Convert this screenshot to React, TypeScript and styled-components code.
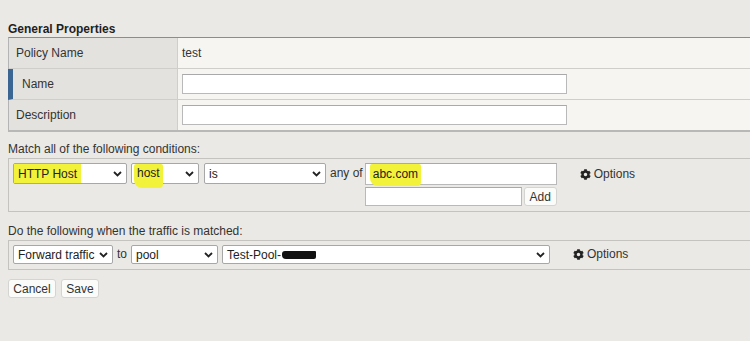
import styled, { createGlobalStyle } from 'styled-components';
import { FaCog } from 'react-icons/fa';

const GlobalStyle = createGlobalStyle`
    html, body {
        margin: 0;
        padding: 0;
        background: #eae9e5;
    }
    body {
        font-family: 'Liberation Sans', Arial, sans-serif;
        font-size: 12px;
        color: #2b2b2b;
    }
`;

const Page = styled.div`
    display: flex;
    flex-direction: column;
    padding: 22px 0 0 8px;
    height: 341px;
    box-sizing: border-box;
`;

const Heading = styled.div`
    font-weight: bold;
    font-size: 12px;
    line-height: 14px;
    color: #1f1f1f;
    margin-bottom: 1px;
`;

const PropTable = styled.div`
    display: grid;
    grid-template-columns: 169px 1fr;
    border-top: 1px solid #8c8c8c;
    border-left: 1px solid #b4b4b4;
    border-bottom: 2px solid #b8b8b6;
`;

const LabelCell = styled.div<{ $marked?: boolean }>`
    display: flex;
    align-items: center;
    height: 30px;
    padding-left: ${(p) => (p.$marked ? '9px' : '7px')};
    background: #e3e2de;
    border-left: ${(p) => (p.$marked ? '5px solid #3b6694' : '0')};
    margin-left: ${(p) => (p.$marked ? '-1px' : '0')};
    border-right: 1px solid #cfcecb;
    border-bottom: 1px solid #cfcecb;
    color: #333;
    &:nth-last-child(2) {
        border-bottom: 0;
    }
`;

const ValueCell = styled.div`
    display: flex;
    align-items: center;
    height: 30px;
    padding-left: 4px;
    background: #f6f5f2;
    border-bottom: 1px solid #cfcecb;
    color: #333;
    &:last-child {
        border-bottom: 0;
    }
`;

const TextInput = styled.div<{ $w: number; $h?: number }>`
    width: ${(p) => p.$w}px;
    height: ${(p) => p.$h ?? 20}px;
    box-sizing: border-box;
    display: flex;
    align-items: center;
    padding-left: 2px;
    background: #fff;
    border: 1px solid #b9b9b9;
    border-top-color: #a9a9a9;
    color: #222;
`;

const SectionLabel = styled.div<{ $top: number }>`
    margin-top: ${(p) => p.$top}px;
    line-height: 14px;
    margin-bottom: 2px;
    color: #333;
`;

const RuleBox = styled.div<{ $h: number }>`
    display: flex;
    align-items: flex-start;
    height: ${(p) => p.$h}px;
    box-sizing: border-box;
    padding: 4px 0 0 4px;
    border: 1px solid #c4c3bf;
    border-right: 0;
    gap: 4px;
`;

const Select = styled.div<{ $w: number; $h?: number }>`
    width: ${(p) => p.$w}px;
    height: ${(p) => p.$h ?? 21}px;
    box-sizing: border-box;
    display: flex;
    align-items: center;
    justify-content: space-between;
    padding: 0 4px 0 0;
    background: #fff;
    border: 1px solid #a7a7a7;
    border-radius: 2px;
    color: #222;
    font-size: 12px;
    flex-shrink: 0;
`;

const SelectText = styled.span`
    padding-left: 4px;
`;

const Highlight = styled.span<{ $drop?: boolean }>`
    display: flex;
    align-items: ${(p) => (p.$drop ? 'flex-start' : 'center')};
    align-self: ${(p) => (p.$drop ? 'flex-start' : 'stretch')};
    padding: ${(p) => (p.$drop ? '2px 3px 0' : '0 4px')};
    margin-left: ${(p) => (p.$drop ? '2px' : '0')};
    height: ${(p) => (p.$drop ? '24px' : 'auto')};
    box-sizing: border-box;
    background: #f2f23a;
    border-radius: ${(p) => (p.$drop ? '2px 2px 4px 8px' : '0')};
    position: relative;
    z-index: 1;
`;

const Chevron = () => (
    <svg width="9" height="6" viewBox="0 0 9 6">
        <path d="M1 1l3.5 3.5L8 1" fill="none" stroke="#222" strokeWidth="1.8" />
    </svg>
);

const Word = styled.span<{ $top?: number }>`
    padding-top: ${(p) => p.$top ?? 3}px;
    color: #333;
`;

const ValueStack = styled.div`
    display: flex;
    flex-direction: column;
    gap: 2px;
    margin-left: -2px;
`;

const StackRow = styled.div`
    display: flex;
    gap: 2px;
`;

const SmallButton = styled.button<{ $w: number; $h?: number }>`
    width: ${(p) => p.$w}px;
    height: ${(p) => p.$h ?? 19}px;
    padding: 0;
    background: #fbfbfa;
    border: 1px solid #d4d4d2;
    border-radius: 3px;
    font-family: inherit;
    font-size: 12px;
    color: #333;
`;

const Options = styled.div<{ $ml: number }>`
    display: flex;
    align-items: center;
    gap: 3px;
    margin-left: ${(p) => p.$ml}px;
    padding-top: 4px;
    color: #333;
    svg {
        color: #222;
    }
`;

const Redacted = styled.span`
    display: inline-block;
    width: 34px;
    height: 8px;
    margin-left: 1px;
    background: #111;
    border-radius: 3px 1px 2px 4px;
    vertical-align: middle;
`;

const ButtonBar = styled.div`
    display: flex;
    gap: 5px;
    margin-top: 9px;
`;

export default function App() {
    return (
        <>
            <GlobalStyle />
            <Page>
                <Heading>General Properties</Heading>
                <PropTable>
                    <LabelCell>Policy Name</LabelCell>
                    <ValueCell>test</ValueCell>
                    <LabelCell $marked>Name</LabelCell>
                    <ValueCell>
                        <TextInput $w={385} />
                    </ValueCell>
                    <LabelCell>Description</LabelCell>
                    <ValueCell>
                        <TextInput $w={385} />
                    </ValueCell>
                </PropTable>

                <SectionLabel $top={10}>Match all of the following conditions:</SectionLabel>
                <RuleBox $h={54}>
                    <Select $w={114}>
                        <Highlight>HTTP Host</Highlight>
                        <Chevron />
                    </Select>
                    <Select $w={68}>
                        <Highlight $drop>host</Highlight>
                        <Chevron />
                    </Select>
                    <Select $w={122} style={{ marginLeft: 1 }}>
                        <SelectText>is</SelectText>
                        <Chevron />
                    </Select>
                    <Word>any of</Word>
                    <ValueStack>
                        <TextInput $w={192} $h={22}>
                            <Highlight $drop style={{ height: 22, paddingTop: 3 }}>abc.com</Highlight>
                        </TextInput>
                        <StackRow>
                            <TextInput $w={157} $h={19} />
                            <SmallButton $w={33}>Add</SmallButton>
                        </StackRow>
                    </ValueStack>
                    <Options $ml={19}>
                        <FaCog size={11} />
                        Options
                    </Options>
                </RuleBox>

                <SectionLabel $top={12}>Do the following when the traffic is matched:</SectionLabel>
                <RuleBox $h={30}>
                    <Select $w={100} $h={19}>
                        <SelectText>Forward traffic</SelectText>
                        <Chevron />
                    </Select>
                    <Word $top={2}>to</Word>
                    <Select $w={87} $h={19}>
                        <SelectText>pool</SelectText>
                        <Chevron />
                    </Select>
                    <Select $w={328} $h={19}>
                        <SelectText>
                            Test-Pool-
                            <Redacted />
                        </SelectText>
                        <Chevron />
                    </Select>
                    <Options $ml={19} style={{ paddingTop: 2 }}>
                        <FaCog size={11} />
                        Options
                    </Options>
                </RuleBox>

                <ButtonBar>
                    <SmallButton $w={48}>Cancel</SmallButton>
                    <SmallButton $w={38}>Save</SmallButton>
                </ButtonBar>
            </Page>
        </>
    );
}
